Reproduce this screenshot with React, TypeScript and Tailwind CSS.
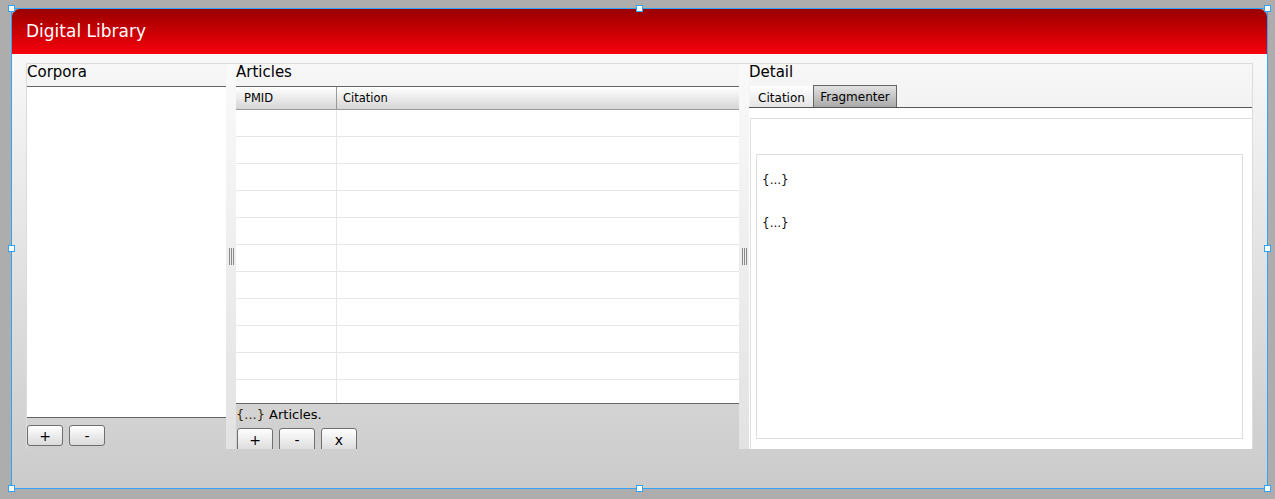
const font = { fontFamily: '"DejaVu Sans", "Liberation Sans", sans-serif' };

function PushButton({ label, className = '' }: { label: string; className?: string }) {
  return (
    <div
      className={`flex h-[21px] w-[36px] items-center justify-center rounded-[3px] border border-[#6f6f6f] bg-gradient-to-b from-[#ffffff] to-[#dadada] text-[14px] leading-none text-black ${className}`}
    >
      {label}
    </div>
  );
}

function Splitter() {
  return (
    <div className="flex w-[10px] shrink-0 items-center justify-center bg-white/40">
      <div className="flex h-[17px] gap-[1px]">
        <div className="w-[1px] bg-[#8a8a8a]" />
        <div className="w-[1px] bg-[#8a8a8a]" />
        <div className="w-[1px] bg-[#8a8a8a]" />
      </div>
    </div>
  );
}

function PanelTitle({ children }: { children: string }) {
  return <div className="h-[22px] shrink-0 text-[15px] leading-[16px] text-black">{children}</div>;
}

function Handle({ className }: { className: string }) {
  return <div className={`absolute h-[7px] w-[7px] border border-[#2fa4ff] bg-white ${className}`} />;
}

const rows = Array.from({ length: 11 });

export default function App() {
  return (
    <div className="relative h-[499px] w-[1275px] overflow-hidden bg-[#adadad] pl-[12px] pt-[9px]" style={font}>
      <div className="flex h-[479px] w-[1255px] flex-col">
        <div className="flex h-[45px] shrink-0 items-center rounded-t-[8px] bg-gradient-to-b from-[#9a0000] to-[#f8000c] pl-[14px]">
          <span className="text-[17px] text-white">Digital Library</span>
        </div>

        <div className="flex flex-1 flex-col bg-gradient-to-b from-[#f8f8f8] to-[#cbcbcb] px-[14px] pt-[9px]">
          <div className="flex h-[386px] border-t border-r border-[#dcdcdc]">
            {/* Corpora */}
            <div className="flex w-[200px] shrink-0 flex-col border-l border-[#dcdcdc]">
              <PanelTitle>Corpora</PanelTitle>
              <div className="flex-1 border-y border-[#666666] bg-white" />
              <div className="flex h-[31px] shrink-0 gap-[6px] pt-[7px]">
                <PushButton label="+" />
                <PushButton label="-" />
              </div>
            </div>

            <Splitter />

            {/* Articles */}
            <div className="flex w-[503px] shrink-0 flex-col">
              <PanelTitle>Articles</PanelTitle>
              <div className="flex h-[318px] shrink-0 flex-col overflow-hidden border-y border-[#666666] bg-white">
                <div className="flex h-[23px] shrink-0 border-b border-[#9a9a9a] bg-gradient-to-b from-[#ffffff] to-[#d6d6d6] text-[11.5px] leading-[22px] text-black">
                  <div className="w-[101px] shrink-0 border-r border-[#9a9a9a] pl-[8px]">PMID</div>
                  <div className="flex-1 pl-[6px]">Citation</div>
                </div>
                {rows.map((_, i) => (
                  <div key={i} className="flex h-[27px] shrink-0 border-b border-[#e6e6e6]">
                    <div className="w-[101px] shrink-0 border-r border-[#e6e6e6]" />
                    <div className="flex-1" />
                  </div>
                ))}
              </div>
              <div className="flex flex-1 flex-col overflow-hidden">
                <div className="h-[22px] shrink-0 text-[13px] leading-[22px] text-black">
                  <span className="text-[#3a2600]">{'{...}'}</span> Articles.
                </div>
                <div className="flex gap-[6px] pl-[1px] pt-[2px]">
                  <PushButton label="+" className="h-[24px]" />
                  <PushButton label="-" className="h-[24px]" />
                  <PushButton label="x" className="h-[24px]" />
                </div>
              </div>
            </div>

            <Splitter />

            {/* Detail */}
            <div className="flex flex-1 flex-col">
              <PanelTitle>Detail</PanelTitle>
              <div className="flex h-[22px] shrink-0 items-end border-b border-[#555555] pl-[1px] text-[12px] text-black">
                <div className="flex h-[21px] w-[63px] items-center justify-center bg-gradient-to-b from-[#ffffff] to-[#e4e4e4] pt-[2px]">
                  Citation
                </div>
                <div className="flex h-[22px] w-[84px] items-center justify-center border border-b-0 border-[#666666] bg-gradient-to-b from-[#e2e2e2] to-[#a9a9a9]">
                  Fragmenter
                </div>
              </div>
              <div className="flex flex-1 flex-col bg-white pl-[1px] pt-[10px]">
                <div className="flex flex-1 flex-col border-t border-l border-[#dedede] pb-[10px] pl-[5px] pr-[9px] pt-[35px]">
                  <div className="flex flex-1 flex-col gap-[28px] border border-[#dedede] pl-[5px] pt-[18px] text-[12px] leading-[15px] text-[#111111]">
                    <div>{'{...}'}</div>
                    <div>{'{...}'}</div>
                  </div>
                </div>
              </div>
            </div>
          </div>
        </div>
      </div>

      {/* selection frame */}
      <div className="pointer-events-none absolute left-[11px] top-[8px] h-[481px] w-[1257px] border border-[#2fa4ff]" />
      <Handle className="left-[8px] top-[5px]" />
      <Handle className="left-[636px] top-[5px]" />
      <Handle className="left-[1264px] top-[5px]" />
      <Handle className="left-[8px] top-[245px]" />
      <Handle className="left-[1264px] top-[245px]" />
      <Handle className="left-[8px] top-[485px]" />
      <Handle className="left-[636px] top-[485px]" />
      <Handle className="left-[1264px] top-[485px]" />
    </div>
  );
}
